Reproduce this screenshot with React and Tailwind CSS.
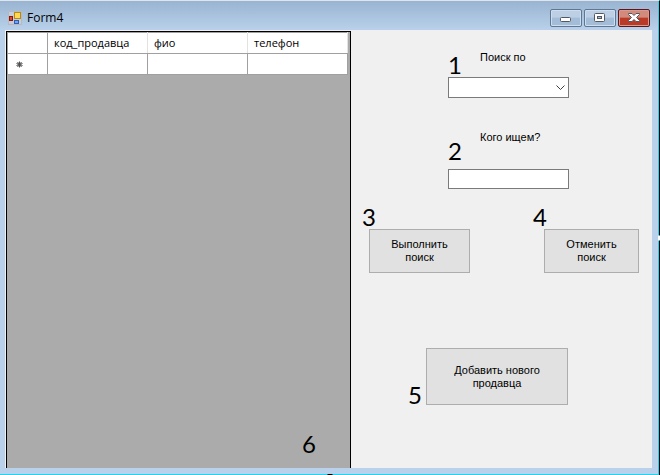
import React, { useState } from 'react';

const columns = ['код_продавца', 'фио', 'телефон'];

const FormIcon = () => (
  <svg width="14" height="14" viewBox="0 0 14 14" className="ml-2 mr-[5px] shrink-0" shapeRendering="crispEdges">
    <rect x="0.5" y="0.5" width="13" height="13" fill="#c3cddb" stroke="#b6b9bf" />
    <rect x="1" y="5" width="4" height="5" fill="#8c1409" />
    <rect x="2" y="6" width="2" height="3" fill="#d9482f" />
    <rect x="6" y="1" width="7" height="7" fill="#b98a10" />
    <rect x="7" y="2" width="5" height="5" fill="#ffd751" />
    <rect x="6" y="9" width="5" height="4" fill="#2e5fb5" />
    <rect x="7" y="10" width="3" height="2" fill="#74a5f0" />
  </svg>
);

const TitleButton = ({ label, className, children }) => (
  <button
    aria-label={label}
    className={`flex h-[18px] w-8 items-center justify-center rounded-[2px] border ${className}`}
  >
    {children}
  </button>
);

const plain = 'border-[#5f7793] bg-linear-to-b from-[#bccfe4] from-45% to-[#a3bcd8] to-50% shadow-[inset_0_0_0_1px_#cfdeee]';
const danger = 'border-[#5b1720] bg-linear-to-b from-[#d28a7c] from-45% to-[#b93a26] to-50% shadow-[inset_0_0_0_1px_#dc9a8d]';

const TitleBar = () => (
  <header className="flex h-[29px] items-center bg-linear-to-b from-[#99b4d1] to-[#b9d1ea] pt-1 pr-2">
    <FormIcon />
    <h1 className="flex-1 font-['Open_Sans',sans-serif] text-[12px] leading-4">Form4</h1>
    <div className="flex gap-0.5">
      <TitleButton label="Свернуть" className={plain}>
        <svg width="12" height="12" viewBox="0 0 12 12">
          <rect x="0.5" y="5.5" width="10" height="4" rx="1" fill="#fff" stroke="#53575f" />
        </svg>
      </TitleButton>
      <TitleButton label="Развернуть" className={plain}>
        <svg width="12" height="12" viewBox="0 0 12 12">
          <rect x="0.5" y="1.5" width="10" height="8" rx="1" fill="#fff" stroke="#53575f" />
          <rect x="3.5" y="4.5" width="4" height="2" fill="#a3bcd8" stroke="#53575f" />
        </svg>
      </TitleButton>
      <TitleButton label="Закрыть" className={danger}>
        <svg width="12" height="12" viewBox="0 0 12 12">
          <path d="M0.5 1.5H4L6 3.5L8 1.5H11.5V2.5L8.5 5.5L11.5 8.5V9.5H8L6 7.5L4 9.5H0.5V8.5L3.5 5.5L0.5 2.5Z" fill="#fff" stroke="#53575f" />
        </svg>
      </TitleButton>
    </div>
  </header>
);

const Mark = ({ className, children }) => (
  <span className={`font-[Lato,sans-serif] text-[24px] leading-7 ${className}`}>{children}</span>
);

const SellersGrid = () => (
  <section className="flex w-[345px] shrink-0 flex-col border border-b-0 border-black bg-[#ababab]">
    <table className="mr-0.5 table-fixed border-collapse border border-[#a0a0a0] bg-white text-left">
      <colgroup>
        <col className="w-10" />
        <col className="w-[100px]" />
        <col className="w-[100px]" />
        <col />
      </colgroup>
      <thead>
        <tr className="h-[21px]">
          <th className="border border-[#a0a0a0]" />
          {columns.map((name) => (
            <th key={name} scope="col" className="border-x border-[#e2e2e2] border-b border-b-[#a0a0a0] px-1.5 font-normal">
              {name}
            </th>
          ))}
        </tr>
      </thead>
      <tbody>
        <tr className="h-[21px]">
          <th scope="row" className="border border-[#a0a0a0] pl-2">
            <svg width="7" height="7" viewBox="0 0 7 7" aria-label="Новая строка">
              <path d="M3.5 0.5V6.5M0.5 2.5L6.5 4.5M6.5 2.5L0.5 4.5M1.5 6L5.5 1M5.5 6L1.5 1" stroke="#505050" />
            </svg>
          </th>
          {columns.map((name) => (
            <td key={name} className="border border-[#a0a0a0]" />
          ))}
        </tr>
      </tbody>
    </table>
    <Mark className="mt-auto mr-[34px] mb-2.5 self-end">6</Mark>
  </section>
);

const FormButton = ({ className, children }) => (
  <button className={`border border-[#adadad] bg-[#e1e1e1] leading-[13px] ${className}`}>{children}</button>
);

const SearchPanel = () => {
  const [field, setField] = useState('');
  const [query, setQuery] = useState('');

  return (
    <section className="flex min-w-0 flex-1 flex-col pl-[11px] font-['Liberation_Sans',Arial,sans-serif]">
      <div className="ml-[86px] flex h-[46px] items-end">
        <Mark className="-mb-0.5 w-8">1</Mark>
        <label htmlFor="field" className="mb-3 leading-4">Поиск по</label>
      </div>
      <div className="relative ml-[86px] w-[121px]">
        <select
          id="field"
          value={field}
          onChange={(e) => setField(e.target.value)}
          className="block h-[21px] w-full appearance-none border border-[#7a7a7a] bg-white px-1"
        >
          <option value="" />
          {columns.map((name) => (
            <option key={name}>{name}</option>
          ))}
        </select>
        <svg width="9" height="6" viewBox="0 0 9 6" className="pointer-events-none absolute top-2 right-1">
          <path d="M0.5 0.5L4.5 4.5L8.5 0.5" fill="none" stroke="#404040" />
        </svg>
      </div>

      <div className="mt-7 ml-[86px] flex h-[43px] items-end">
        <Mark className="mb-1 w-8">2</Mark>
        <label htmlFor="query" className="mb-6 leading-4">Кого ищем?</label>
      </div>
      <input
        id="query"
        type="text"
        value={query}
        onChange={(e) => setQuery(e.target.value)}
        className="ml-[86px] h-5 w-[121px] border border-[#7a7a7a] bg-white px-1"
      />

      <div className="mt-3.5 flex justify-between pr-[13px]">
        <div className="flex flex-col">
          <Mark className="-mb-0.5">3</Mark>
          <FormButton className="ml-[7px] h-11 w-[101px] px-5">Выполнить поиск</FormButton>
        </div>
        <div className="flex flex-col">
          <Mark className="-mb-0.5">4</Mark>
          <FormButton className="ml-[11px] h-11 w-[95px] px-4">Отменить поиск</FormButton>
        </div>
      </div>

      <div className="mt-[75px] ml-[46px] flex items-end">
        <Mark className="-mb-1 w-[18px]">5</Mark>
        <FormButton className="h-[57px] w-[142px] px-5">Добавить нового продавца</FormButton>
      </div>
    </section>
  );
};

export default function App() {
  return (
    <div className="relative flex h-screen flex-col border-t border-r border-t-[#dfe5ea] border-r-black bg-[#b9d1ea] font-['Open_Sans',sans-serif] text-[11px] text-black">
      <div className="flex min-h-0 flex-1 flex-col border-r border-b border-[#22d3ee]">
        <TitleBar />
        <main className="mr-1.5 mb-1.5 ml-[5px] flex min-h-0 flex-1 bg-[#f0f0f0] pt-px pl-px">
          <SellersGrid />
          <SearchPanel />
        </main>
      </div>
      {/* resize handles */}
      <span className="absolute top-1/2 -right-px h-[5px] w-0.5 -translate-y-1/2 bg-white" />
      <span className="absolute bottom-0 left-1/2 h-px w-[5px] -translate-x-1/2 bg-black" />
    </div>
  );
}
